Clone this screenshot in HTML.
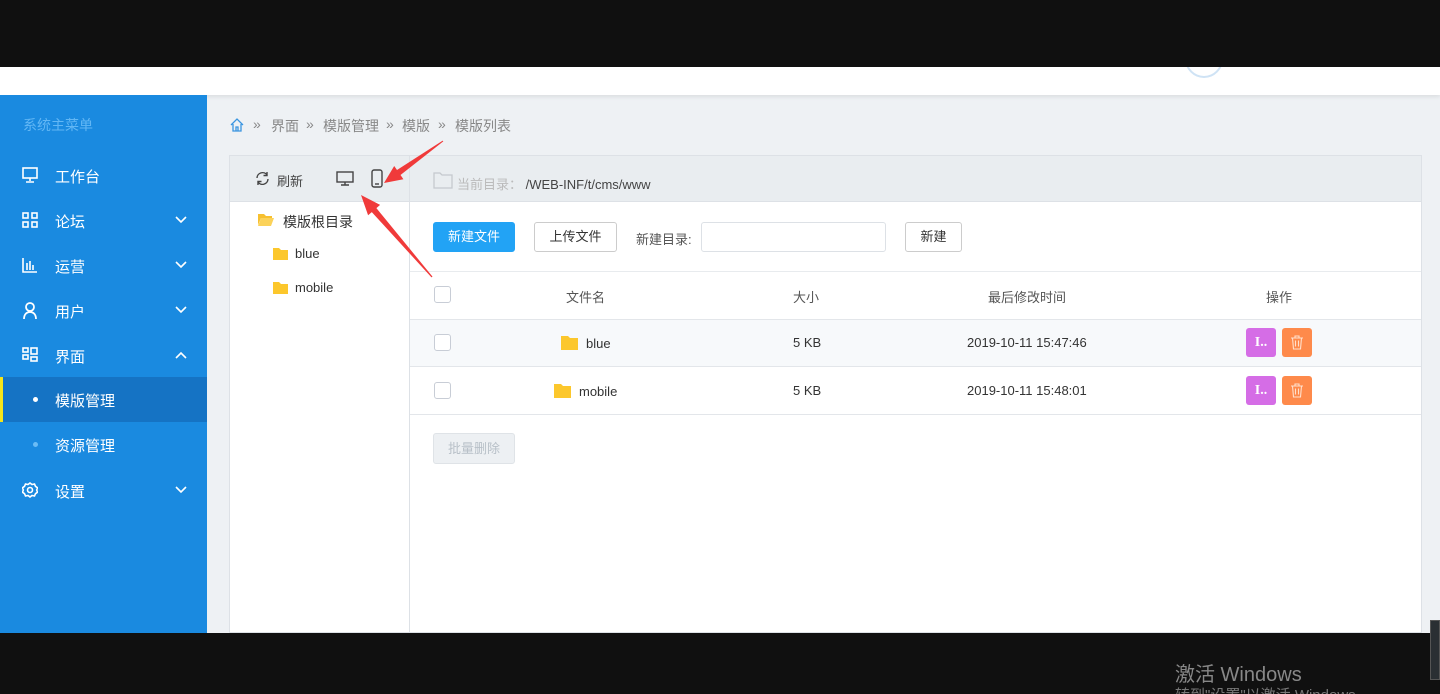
<!DOCTYPE html><html><head><meta charset="utf-8"><style>
*{margin:0;padding:0;box-sizing:border-box}
html,body{width:1440px;height:694px;overflow:hidden}
body{position:relative;background:#eef1f4;font-family:"Liberation Sans","Noto Sans CJK SC",sans-serif;font-size:13px;color:#333}
.abs{position:absolute}
.side{left:0;top:95px;width:207px;height:538px;background:#1a8ae0;color:#fff}
.mi{position:absolute;left:0;width:207px;height:45px;font-size:15px}
.mi .t{position:absolute;left:55px;top:13px}
.mi svg.ic{position:absolute;left:22px;top:14px}
.mi .ch{position:absolute;left:175px;top:18px}
.th{color:#555;font-size:13px}
.btn{position:absolute;height:30px;border:1px solid #ccc;border-radius:3px;background:#fff;text-align:center;line-height:28px;font-size:13px}
.cb{position:absolute;left:434px;width:17px;height:17px;border:1px solid #c8cdd6;border-radius:3px;background:#fff}
.bc{position:absolute;top:116px;font-size:14px;color:#888}
</style></head><body>
<div class="abs" style="left:0;top:67px;width:1440px;height:28px;background:#fff;box-shadow:0 2px 4px rgba(0,0,0,.08)"></div>
<div class="abs" style="left:1185px;top:40px;width:38px;height:38px;border:2px solid #cfe3f5;border-radius:50%"></div>
<div class="abs" style="left:0;top:0;width:1440px;height:67px;background:#101010"></div>

<div class="abs side">
<div class="abs" style="left:23px;top:20px;font-size:14px;color:#62b7f5">系统主菜单</div>
<div class="mi" style="top:58px"><svg class="ic" width="16" height="16" viewBox="0 0 16 16" fill="none" stroke="#fff" stroke-width="1.6"><rect x="1" y="1" width="14" height="10"/><path d="M8 11v3M4 15h8"/></svg><span class="t">工作台</span></div>
<div class="mi" style="top:103px"><svg class="ic" width="16" height="16" viewBox="0 0 16 16" fill="none" stroke="#fff" stroke-width="1.6"><rect x="1" y="1" width="5" height="5"/><rect x="10" y="1" width="5" height="5"/><rect x="1" y="10" width="5" height="5"/><rect x="10" y="10" width="5" height="5"/></svg><span class="t">论坛</span><svg class="ch" width="12" height="8" viewBox="0 0 12 8" fill="none" stroke="#fff" stroke-width="1.6"><path d="M1 1l5 5 5-5"/></svg></div>
<div class="mi" style="top:148px"><svg class="ic" width="16" height="16" viewBox="0 0 16 16" fill="none" stroke="#fff" stroke-width="1.6"><path d="M1 1v14h14M5 6v7M8 4v9M11 8v5"/></svg><span class="t">运营</span><svg class="ch" width="12" height="8" viewBox="0 0 12 8" fill="none" stroke="#fff" stroke-width="1.6"><path d="M1 1l5 5 5-5"/></svg></div>
<div class="mi" style="top:193px"><svg class="ic" width="16" height="18" viewBox="0 0 16 18" fill="none" stroke="#fff" stroke-width="1.8"><circle cx="8" cy="5" r="4"/><path d="M2 17c0-5 3-7 6-7s6 2 6 7"/></svg><span class="t">用户</span><svg class="ch" width="12" height="8" viewBox="0 0 12 8" fill="none" stroke="#fff" stroke-width="1.6"><path d="M1 1l5 5 5-5"/></svg></div>
<div class="mi" style="top:238px"><svg class="ic" width="16" height="16" viewBox="0 0 16 16" fill="none" stroke="#fff" stroke-width="1.6"><rect x="1" y="1" width="5" height="4"/><rect x="1" y="8" width="5" height="4"/><rect x="9" y="1" width="6" height="6"/><rect x="9" y="10" width="6" height="4"/></svg><span class="t">界面</span><svg class="ch" width="12" height="8" viewBox="0 0 12 8" fill="none" stroke="#fff" stroke-width="1.6"><path d="M1 7l5-5 5 5"/></svg></div>
<div class="mi" style="top:282px;background:#1573c4"><div class="abs" style="left:0;top:0;width:3px;height:45px;background:#f5e51a"></div><div class="abs" style="left:33px;top:20px;width:5px;height:5px;border-radius:50%;background:#fff"></div><span class="t">模版管理</span></div>
<div class="mi" style="top:327px"><div class="abs" style="left:33px;top:20px;width:5px;height:5px;border-radius:50%;background:#6bbcf5"></div><span class="t">资源管理</span></div>
<div class="mi" style="top:373px"><svg class="ic" width="16" height="16" viewBox="0 0 16 16" fill="none" stroke="#fff" stroke-width="1.6"><circle cx="8" cy="8" r="2.5"/><path d="M8 1l2 1.5 2.5-.5 1 2.3 2 1.5-.8 2.2.8 2.2-2 1.5-1 2.3-2.5-.5L8 15l-2-1.5-2.5.5-1-2.3-2-1.5.8-2.2L.5 5.8l2-1.5 1-2.3 2.5.5z"/></svg><span class="t">设置</span><svg class="ch" width="12" height="8" viewBox="0 0 12 8" fill="none" stroke="#fff" stroke-width="1.6"><path d="M1 1l5 5 5-5"/></svg></div>
</div>

<svg class="abs" style="left:230px;top:118px" width="14" height="14" viewBox="0 0 14 14" fill="none" stroke="#3a95e0" stroke-width="1.3"><path d="M1 7L7 1l6 6M3 6v7h8V6M6 13V9h2v4"/></svg>
<div class="bc" style="left:253px">»</div><div class="bc" style="left:271px">界面</div>
<div class="bc" style="left:306px">»</div><div class="bc" style="left:323px">模版管理</div>
<div class="bc" style="left:386px">»</div><div class="bc" style="left:402px">模版</div>
<div class="bc" style="left:438px">»</div><div class="bc" style="left:455px">模版列表</div>

<div class="abs" style="left:229px;top:155px;width:1193px;height:478px;background:#fff;border:1px solid #dde1e6"></div>
<div class="abs" style="left:230px;top:156px;width:1191px;height:46px;background:#e9edf0;border-bottom:1px solid #dde1e6"></div>
<div class="abs" style="left:409px;top:156px;width:1px;height:477px;background:#dde1e6"></div>
<svg class="abs" style="left:255px;top:171px" width="15" height="15" viewBox="0 0 15 15" fill="none" stroke="#444" stroke-width="1.4"><path d="M2 7a5.5 5.5 0 0 1 10-3M13 8a5.5 5.5 0 0 1-10 3"/><path d="M12 1v3.5H8.5M3 14v-3.5h3.5"/></svg>
<div class="abs" style="left:277px;top:171px;font-size:13px;color:#444">刷新</div>
<svg class="abs" style="left:336px;top:171px" width="18" height="15" viewBox="0 0 18 15" fill="none" stroke="#444" stroke-width="1.4"><rect x="1" y="1" width="16" height="10"/><path d="M9 11v3M5 14h8"/></svg>
<svg class="abs" style="left:371px;top:169px" width="12" height="19" viewBox="0 0 12 19" fill="none" stroke="#444" stroke-width="1.4"><rect x="1" y="1" width="10" height="17" rx="2"/><path d="M4 15h4"/></svg>
<svg class="abs" style="left:258px;top:213px" width="16" height="13" viewBox="0 0 16 13"><path d="M0 1h6l2 2h6v2H3L0 12z" fill="#f7c02f"/><path d="M3 5h13l-3 8H0z" fill="#fbd25a"/></svg>
<div class="abs" style="left:283px;top:212px;font-size:14px;color:#333">模版根目录</div>
<svg class="abs" style="left:273px;top:248px" width="15" height="12" viewBox="0 0 15 12"><path d="M0 0h6l2 2h7v10H0z" fill="#fcc72c"/></svg>
<div class="abs" style="left:295px;top:246px;font-size:13px">blue</div>
<svg class="abs" style="left:273px;top:282px" width="15" height="12" viewBox="0 0 15 12"><path d="M0 0h6l2 2h7v10H0z" fill="#fcc72c"/></svg>
<div class="abs" style="left:295px;top:280px;font-size:13px">mobile</div>

<svg class="abs" style="left:433px;top:172px" width="20" height="17" viewBox="0 0 20 17" fill="none" stroke="#c5c9ce" stroke-width="1.3"><path d="M1 1h6l2 2h10v13H1z"/></svg>
<div class="abs" style="left:457px;top:174px;color:#bbb;font-size:13px">当前目录： <span style="color:#444">/WEB-INF/t/cms/www</span></div>

<div class="btn" style="left:433px;top:222px;width:82px;background:#22a3f5;border-color:#22a3f5;color:#fff">新建文件</div>
<div class="btn" style="left:534px;top:222px;width:83px">上传文件</div>
<div class="abs th" style="left:636px;top:229px">新建目录:</div>
<div class="abs" style="left:701px;top:222px;width:185px;height:30px;border:1px solid #dde1e6;border-radius:3px"></div>
<div class="btn" style="left:905px;top:222px;width:57px">新建</div>

<div class="abs" style="left:410px;top:271px;width:1011px;height:1px;background:#e8ebee"></div>
<div class="abs" style="left:410px;top:319px;width:1011px;height:48px;background:#f7f9fb;border-top:1px solid #e3e6ea;border-bottom:1px solid #e3e6ea"></div>
<div class="abs" style="left:410px;top:414px;width:1011px;height:1px;background:#e3e6ea"></div>
<div class="cb" style="top:286px"></div><div class="cb" style="top:334px"></div><div class="cb" style="top:382px"></div>
<div class="abs th" style="left:566px;top:287px">文件名</div>
<div class="abs th" style="left:793px;top:287px">大小</div>
<div class="abs th" style="left:988px;top:287px">最后修改时间</div>
<div class="abs th" style="left:1266px;top:287px">操作</div>

<svg class="abs" style="left:561px;top:336px" width="17" height="14" viewBox="0 0 17 14"><path d="M0 0h7l2 2h8v12H0z" fill="#fcc72c"/></svg>
<div class="abs" style="left:586px;top:336px">blue</div>
<div class="abs" style="left:793px;top:335px">5 KB</div>
<div class="abs" style="left:967px;top:335px">2019-10-11 15:47:46</div>
<svg class="abs" style="left:554px;top:384px" width="17" height="14" viewBox="0 0 17 14"><path d="M0 0h7l2 2h8v12H0z" fill="#fcc72c"/></svg>
<div class="abs" style="left:579px;top:384px">mobile</div>
<div class="abs" style="left:793px;top:383px">5 KB</div>
<div class="abs" style="left:967px;top:383px">2019-10-11 15:48:01</div>

<div class="abs" style="left:1246px;top:328px;width:30px;height:29px;background:#d56de6;border-radius:3px;color:#fff;font-weight:bold;font-size:14px;text-align:center;line-height:29px;font-family:'Liberation Serif',serif">I..</div>
<div class="abs" style="left:1282px;top:328px;width:30px;height:29px;background:#fe8a4b;border-radius:3px"></div>
<div class="abs" style="left:1246px;top:376px;width:30px;height:29px;background:#d56de6;border-radius:3px;color:#fff;font-weight:bold;font-size:14px;text-align:center;line-height:29px;font-family:'Liberation Serif',serif">I..</div>
<div class="abs" style="left:1282px;top:376px;width:30px;height:29px;background:#fe8a4b;border-radius:3px"></div>
<svg class="abs" style="left:1290px;top:335px" width="14" height="15" viewBox="0 0 14 15" fill="none" stroke="#ffe0cc" stroke-width="1.1"><path d="M1 3h12M5 3V1h4v2M2.5 3l1 11h7l1-11M5.5 5.5v6M8.5 5.5v6"/></svg>
<svg class="abs" style="left:1290px;top:383px" width="14" height="15" viewBox="0 0 14 15" fill="none" stroke="#ffe0cc" stroke-width="1.1"><path d="M1 3h12M5 3V1h4v2M2.5 3l1 11h7l1-11M5.5 5.5v6M8.5 5.5v6"/></svg>

<div class="abs" style="left:433px;top:433px;width:82px;height:31px;background:#edf0f3;border:1px solid #dfe3e7;border-radius:3px;color:#b8c0c8;text-align:center;line-height:29px">批量删除</div>

<svg class="abs" style="left:0;top:0" width="1440" height="694">
<polygon points="443.3,141.4 400.5,175 403.4,179.2 384,183 394.2,166 397,170 442.7,140.6" fill="#f03a3a"/>
<polygon points="432.5,276.6 376.4,208.1 380.1,204.9 361,195 368.1,215.3 371.8,212.1 431.5,277.4" fill="#f03a3a"/>
</svg>

<div class="abs" style="left:0;top:633px;width:1440px;height:61px;background:#101010;overflow:hidden">
<div class="abs" style="left:1175px;top:25px;font-size:20px;color:#888">激活 Windows</div>
<div class="abs" style="left:1175px;top:51px;font-size:15px;color:#777">转到"设置"以激活 Windows</div>
</div>
<div class="abs" style="left:1430px;top:620px;width:10px;height:60px;background:#2a2f33;border:1px solid #555"></div>
</body></html>
